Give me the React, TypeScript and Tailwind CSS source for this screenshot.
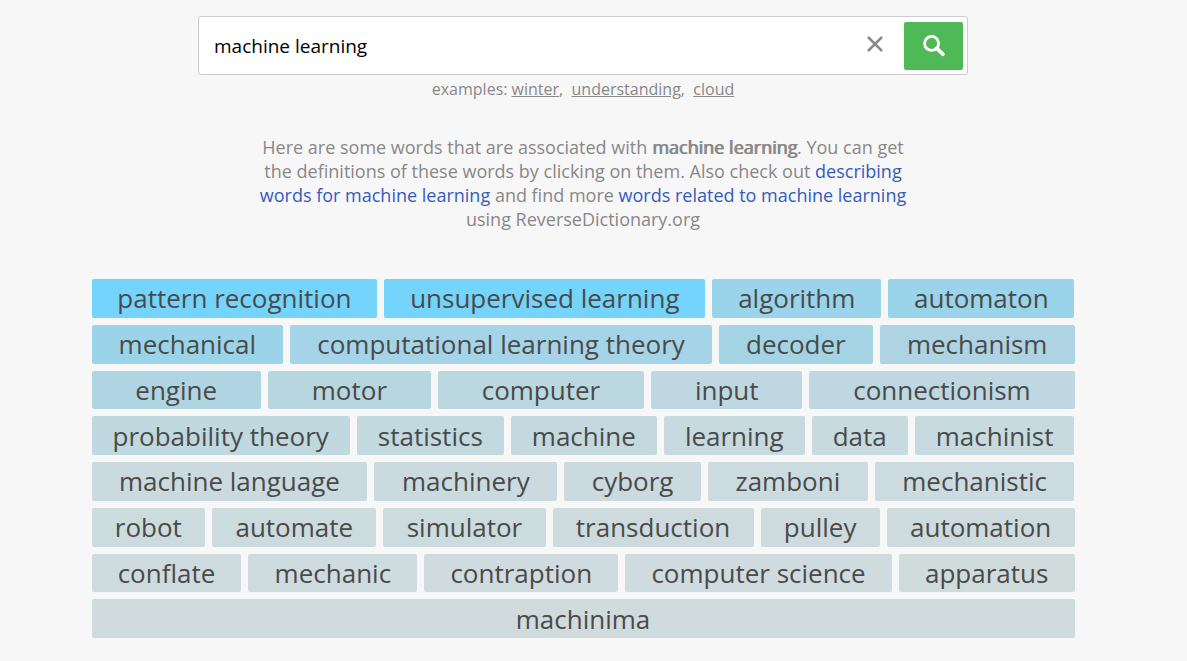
import { useState, type FormEvent } from "react";

const words: [string, string][] = [
  ["pattern recognition", "bg-[#74d4fb]"],
  ["unsupervised learning", "bg-[#74d4fb]"],
  ["algorithm", "bg-[#99d4ea]"],
  ["automaton", "bg-[#99d4ea]"],
  ["mechanical", "bg-[#9bd4e8]"],
  ["computational learning theory", "bg-[#a5d4e8]"],
  ["decoder", "bg-[#a4d4e4]"],
  ["mechanism", "bg-[#aed3e3]"],
  ["engine", "bg-[#afd4e2]"],
  ["motor", "bg-[#b8d6e0]"],
  ["computer", "bg-[#bbd7df]"],
  ["input", "bg-[#bed7e0]"],
  ["connectionism", "bg-[#bed7e1]"],
  ["probability theory", "bg-[#c0d8df]"],
  ["statistics", "bg-[#c2d9df]"],
  ["machine", "bg-[#c4d9df]"],
  ["learning", "bg-[#c6dadf]"],
  ["data", "bg-[#c6dadf]"],
  ["machinist", "bg-[#c6dadf]"],
  ["machine language", "bg-[#cadadf]"],
  ["machinery", "bg-[#cadadf]"],
  ["cyborg", "bg-[#cadadf]"],
  ["zamboni", "bg-[#cbdbe0]"],
  ["mechanistic", "bg-[#cbdbe0]"],
  ["robot", "bg-[#ccdbde]"],
  ["automate", "bg-[#ccdbde]"],
  ["simulator", "bg-[#ccdbde]"],
  ["transduction", "bg-[#cddbde]"],
  ["pulley", "bg-[#cddbde]"],
  ["automation", "bg-[#cddbdf]"],
  ["conflate", "bg-[#cddbde]"],
  ["mechanic", "bg-[#cedbdf]"],
  ["contraption", "bg-[#d0dbe0]"],
  ["computer science", "bg-[#d0dbe0]"],
  ["apparatus", "bg-[#d0dbdc]"],
  ["machinima", "bg-[#d0dbdd]"],
];

const examples = ["winter", "understanding", "cloud"];

function SearchBar() {
  const [query, setQuery] = useState("machine learning");
  const submit = (e: FormEvent) => e.preventDefault();
  return (
    <form
      onSubmit={submit}
      className="flex w-full max-w-[770px] items-center rounded-[3px] border border-[#cccccc] bg-white py-1 pr-1 pl-[15px]"
    >
      <input
        type="text"
        aria-label="Search for a word"
        value={query}
        onChange={(e) => setQuery(e.target.value)}
        className="h-[49px] min-w-0 flex-1 bg-transparent text-[19px] text-black outline-none"
      />
      <button
        type="button"
        aria-label="Clear search"
        onClick={() => setQuery("")}
        className="flex h-12 w-[59px] items-center justify-center pb-1 text-[#888888]"
      >
        <svg viewBox="0 0 16 16" className="size-4" fill="none" stroke="currentColor" strokeWidth="2.5">
          <path d="M1 1 15 15M15 1 1 15" />
        </svg>
      </button>
      <button
        type="submit"
        aria-label="Search"
        className="flex h-12 w-[59px] items-center justify-center rounded-[2px] bg-[#4fb857] text-white"
      >
        <svg viewBox="0 0 22 22" className="size-[22px]" fill="none" stroke="currentColor">
          <circle cx="8.6" cy="8.4" r="7" strokeWidth="2.9" />
          <path d="M13.6 13.2 19.8 19.2" strokeWidth="3.8" strokeLinecap="round" />
        </svg>
      </button>
    </form>
  );
}

export default function App() {
  return (
    <div className="min-h-screen bg-[#f7f7f7] pt-4 pr-[21px] pb-[23px] font-['Open_Sans','Noto_Sans',sans-serif] text-[#888888]">
      <main className="flex flex-col items-center">
        <SearchBar />
        <p className="mt-0.5 text-[16px] leading-6">
          examples:{" "}
          {examples.map((word, i) => (
            <span key={word}>
              <a href="#" className="underline">
                {word}
              </a>
              {i < examples.length - 1 && <>,&nbsp; </>}
            </span>
          ))}
        </p>
        <p className="mt-[34px] max-w-[660px] text-center text-[18px] leading-6">
          Here are some words that are associated with{" "}
          <b className="font-normal [text-shadow:1px_0_0_currentColor]">machine learning</b>. You can get the
          definitions of these words by clicking on them. Also check out{" "}
          <a href="#" className="text-[#345bc1]">
            describing words for machine learning
          </a>{" "}
          and find more{" "}
          <a href="#" className="text-[#345bc1]">
            words related to machine learning
          </a>{" "}
          using ReverseDictionary.org
        </p>
        <div className="mt-12 flex min-h-[359px] w-full max-w-[983px] flex-wrap gap-[7px] text-[26px] leading-[38px] text-[#4a4a4a]">
          {words.map(([word, color]) => (
            <a
              key={word}
              href="#"
              className={`flex grow items-center justify-center rounded-[2px] px-[19px] ${color}`}
            >
              {word}
            </a>
          ))}
        </div>
      </main>
    </div>
  );
}
